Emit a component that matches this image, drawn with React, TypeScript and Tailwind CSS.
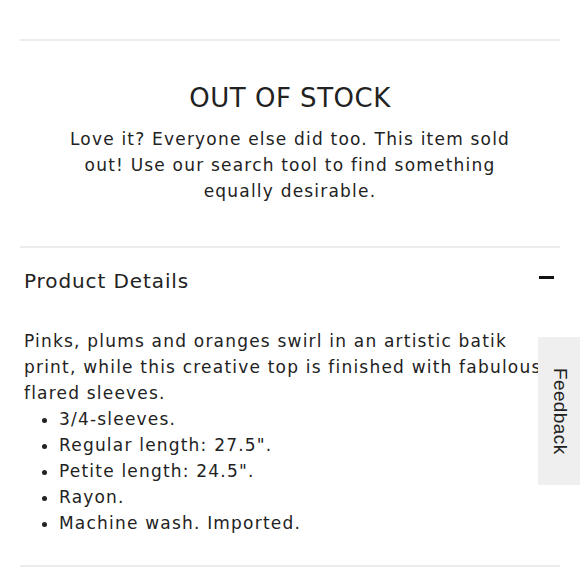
import React from "react";

export default function App() {
  const bullets = [
    "3/4-sleeves.",
    'Regular length: 27.5".',
    'Petite length: 24.5".',
    "Rayon.",
    "Machine wash. Imported.",
  ];
  return (
    <div className="relative w-[580px] h-[580px] overflow-hidden bg-white text-[#222]" style={{ fontFamily: '"DejaVu Sans", sans-serif' }}>
      <div className="px-5 pt-[39px]">
        <div className="h-[2px] bg-[#ececec]" />
        <div className="pt-[41px] pb-[42px] text-center">
          <h2 className="text-[26px] leading-[32px] tracking-[0.5px] font-normal">OUT OF STOCK</h2>
          <p className="mt-[12px] px-[40px] text-[17px] leading-[26px] tracking-[1.2px]">
            Love it? Everyone else did too. This item sold out! Use our search tool to find something equally desirable.
          </p>
        </div>
        <div className="h-[2px] bg-[#ececec]" />
        <div className="flex items-center justify-between pl-1 pr-[6px] pt-[18px]">
          <h3 className="text-[20px] leading-[30px] tracking-[0.9px] font-normal">Product Details</h3>
          <div className="w-[15px] h-[3px] bg-[#111] -mt-[7px]" />
        </div>
        <div className="pl-1 pt-[32px] text-[17px] leading-[26px] tracking-[1.2px] w-[560px]">
          <p className="whitespace-nowrap">Pinks, plums and oranges swirl in an artistic batik</p>
          <p className="whitespace-nowrap">print, while this creative top is finished with fabulous</p>
          <p>flared sleeves.</p>
          <ul className="list-disc pl-[35px]">
            {bullets.map((b) => (
              <li key={b}>{b}</li>
            ))}
          </ul>
        </div>
      </div>
      <div className="absolute left-5 right-5 top-[565px] h-[2px] bg-[#ececec]" />
      <div className="absolute right-0 top-[337px] w-[42px] h-[148px] bg-[#efefef] flex items-center justify-center">
        <span className="block rotate-90 whitespace-nowrap text-[19px] text-[#222] tracking-[0.4px]" style={{ fontFamily: '"Liberation Sans", sans-serif' }}>
          Feedback
        </span>
      </div>
    </div>
  );
}
